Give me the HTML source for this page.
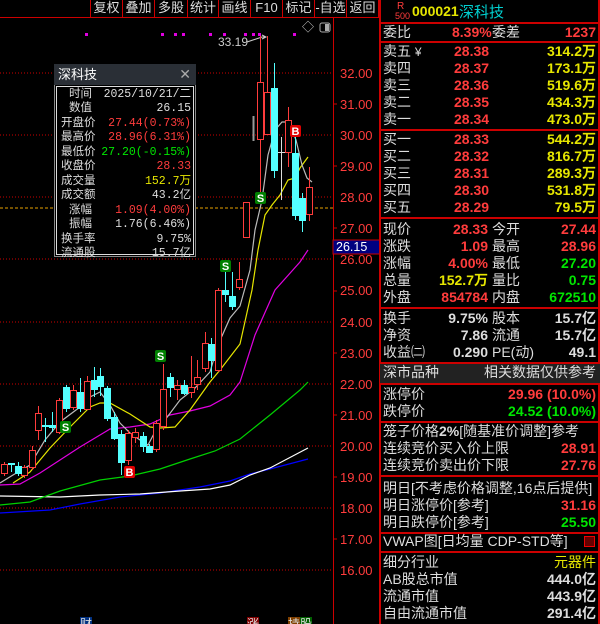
<!DOCTYPE html>
<html><head><meta charset="utf-8"><style>
*{margin:0;padding:0;box-sizing:border-box}
body{width:600px;height:624px;background:#000;position:relative;overflow:hidden;font-family:"Liberation Sans","Noto Sans CJK SC",sans-serif;color:#ddd}
.tb{position:absolute;top:0;height:17px;border-left:1px solid #c00;color:#ddd;font-size:13px;line-height:16px;text-align:center}
.r{position:absolute;left:380px;width:220px;height:17px;font-size:14px;line-height:17px}
.r span{position:absolute}
.l{left:3px;color:#ddd}
.rt{right:4px;text-align:right;font-weight:bold}
.hl{position:absolute;left:380px;width:220px;height:2px;background:#c00}
.red{color:#ff3c3c}.grn{color:#00e600}.yel{color:#e6e600}.wht{color:#ddd}
.pp{position:absolute;left:56px;width:138px;font-size:11.5px;height:15px;line-height:15px}
.pp .a{position:absolute;left:5px;color:#ddd}
.pp .b{position:absolute;right:3px;font-family:"Liberation Mono",monospace}
</style></head><body>
<div class="tb" style="left:90px;width:32px">复权</div>
<div class="tb" style="left:122px;width:32px">叠加</div>
<div class="tb" style="left:154px;width:33px">多股</div>
<div class="tb" style="left:187px;width:31px">统计</div>
<div class="tb" style="left:218px;width:32px">画线</div>
<div class="tb" style="left:250px;width:32px">F10</div>
<div class="tb" style="left:282px;width:32px">标记</div>
<div class="tb" style="left:314px;width:32px">-自选</div>
<div class="tb" style="left:346px;width:33px;border-right:1px solid #c00">返回</div>
<div style="position:absolute;left:0;top:17px;width:380px;height:1px;background:#c00"></div>

<svg style="position:absolute;left:0;top:0" width="380" height="624">
<g stroke="#c00" stroke-dasharray="1,2" stroke-width="1">
<line x1="0" y1="73" x2="333" y2="73"/><line x1="0" y1="135" x2="333" y2="135"/><line x1="0" y1="197" x2="333" y2="197"/><line x1="0" y1="259" x2="333" y2="259"/><line x1="0" y1="322" x2="333" y2="322"/><line x1="0" y1="384" x2="333" y2="384"/><line x1="0" y1="446" x2="333" y2="446"/><line x1="0" y1="508" x2="333" y2="508"/><line x1="0" y1="570" x2="333" y2="570"/>
</g>
<line x1="333.5" y1="18" x2="333.5" y2="624" stroke="#c00"/>
<line x1="0" y1="208" x2="333" y2="208" stroke="#e6a000" stroke-dasharray="3,2"/>
<g fill="#ff3c3c" font-size="13" font-family="Liberation Sans,sans-serif">
<text x="340" y="78">32.00</text><text x="340" y="109">31.00</text><text x="340" y="140">30.00</text><text x="340" y="171">29.00</text><text x="340" y="202">28.00</text><text x="340" y="233">27.00</text><text x="340" y="264">26.00</text><text x="340" y="295">25.00</text><text x="340" y="327">24.00</text><text x="340" y="358">23.00</text><text x="340" y="389">22.00</text><text x="340" y="420">21.00</text><text x="340" y="451">20.00</text><text x="340" y="482">19.00</text><text x="340" y="513">18.00</text><text x="340" y="544">17.00</text><text x="340" y="575">16.00</text>
</g>
<g stroke="#c00"><line x1="333" y1="104" x2="337" y2="104"/><line x1="333" y1="166" x2="337" y2="166"/><line x1="333" y1="228" x2="337" y2="228"/><line x1="333" y1="291" x2="337" y2="291"/><line x1="333" y1="353" x2="337" y2="353"/><line x1="333" y1="415" x2="337" y2="415"/><line x1="333" y1="477" x2="337" y2="477"/><line x1="333" y1="539" x2="337" y2="539"/></g>
<rect x="333" y="240" width="47" height="14" fill="#000080" stroke="#c00"/>
<text x="336" y="251" fill="#fff" font-size="12.5" font-family="Liberation Sans,sans-serif">26.15</text>
<g fill="#e000e0"><rect x="85" y="33" width="3" height="3"/><rect x="161" y="33" width="3" height="3"/><rect x="174" y="33" width="3" height="3"/><rect x="182" y="33" width="3" height="3"/><rect x="209" y="33" width="3" height="3"/><rect x="223" y="33" width="3" height="3"/><rect x="244" y="33" width="3" height="3"/><rect x="252" y="33" width="3" height="3"/><rect x="258" y="33" width="3" height="3"/><rect x="293" y="33" width="3" height="3"/></g>
<text x="218" y="46" fill="#ccc" font-size="12" font-family="Liberation Sans,sans-serif">33.19</text>
<path d="M247 42 L262 37 L266 37 M262 35 L266 37 L262 39" stroke="#ccc" fill="none"/>
<text x="302" y="31" fill="#ccc" font-size="12">◇</text>
<rect x="320" y="23" width="10" height="9" rx="2" fill="none" stroke="#aaa"/><rect x="325" y="24" width="4" height="7" fill="#aaa"/>
<!-- MAs -->
<g fill="none" stroke-width="1.2">
<polyline stroke="#0000ff" points="0,513 50,510 80,504 120,497 160,493 200,487 230,481 250,474 270,469 308,459"/>
<polyline stroke="#ffffff" points="0,496 60,497 100,495 140,494 180,491 210,489 230,485 250,475 270,468 308,448"/>
<polyline stroke="#00d000" points="0,505 30,502 60,491 100,480 130,476 160,469 190,459 215,451 240,439 270,415 300,390 308,382"/>
<polyline stroke="#e000e0" points="0,485 20,484 40,473 60,460 80,447 100,435 110,429 130,427 150,424 170,415 190,411 210,406 230,395 240,382 255,335 275,290 300,262 308,250"/>
<polyline stroke="#e6e600" points="13,483 30,472 50,448 70,427 90,407 100,403 110,403 130,414 150,427 160,428 175,427 190,410 210,382 220,370 240,344 252,290 258,250 265,215 272,205 280,195 288,180 295,178 300,168 308,157"/>
<polyline stroke="#bbbbbb" points="0,483 13,475 30,465 45,440 60,422 80,407 90,397 100,392 110,405 120,423 130,433 140,440 148,445 157,428 165,420 180,400 195,388 210,372 218,345 230,318 240,306 250,270 255,230 262,200 268,155 275,130 282,122 289,122 296,140 302,165 307,178 312,182"/>
</g>
<!-- candles -->
<g stroke="#ff3c3c" fill="#000" stroke-width="1">
<line x1="4.5" y1="462" x2="4.5" y2="476"/><rect x="1.5" y="464.5" width="6" height="9"/>
<line x1="24.5" y1="465" x2="24.5" y2="478"/><rect x="21.5" y="467.5" width="6" height="8"/>
<line x1="32.5" y1="446" x2="32.5" y2="470"/><rect x="29.5" y="450.5" width="6" height="17"/>
<line x1="38.5" y1="406" x2="38.5" y2="440"/><rect x="35.5" y="413.5" width="6" height="17"/>
<line x1="59.5" y1="398" x2="59.5" y2="434"/><rect x="56.5" y="400.5" width="6" height="32"/>
<line x1="73.5" y1="385" x2="73.5" y2="410"/><rect x="70.5" y="390.5" width="6" height="17"/>
<line x1="87.5" y1="376" x2="87.5" y2="410"/><rect x="84.5" y="381.5" width="6" height="28"/>
<line x1="128.5" y1="430" x2="128.5" y2="465"/><rect x="125.5" y="433.5" width="6" height="27"/>
<line x1="135.5" y1="428" x2="135.5" y2="443"/><rect x="132.5" y="432.5" width="6" height="5"/>
<line x1="156.5" y1="420" x2="156.5" y2="452"/><rect x="153.5" y="423.5" width="6" height="26"/>
<line x1="163.5" y1="364" x2="163.5" y2="430"/><rect x="160.5" y="389.5" width="6" height="37"/>
<line x1="177.5" y1="380" x2="177.5" y2="400"/><rect x="174.5" y="385.5" width="6" height="4"/>
<line x1="191.5" y1="356" x2="191.5" y2="398"/><rect x="188.5" y="387.5" width="6" height="5"/>
<line x1="197.5" y1="360" x2="197.5" y2="390"/><rect x="194.5" y="377.5" width="6" height="7"/>
<line x1="205.5" y1="332" x2="205.5" y2="372"/><rect x="202.5" y="343.5" width="6" height="25"/>
<line x1="218.5" y1="288" x2="218.5" y2="372"/><rect x="215.5" y="290.5" width="6" height="80"/>
<line x1="239.5" y1="262" x2="239.5" y2="290"/><rect x="236.5" y="279.5" width="6" height="8"/>
<rect x="243.5" y="202.5" width="6" height="35"/>
<line x1="260.5" y1="36" x2="260.5" y2="193"/><rect x="257.5" y="82.5" width="6" height="57"/>
<line x1="267.5" y1="36" x2="267.5" y2="134"/><rect x="264.5" y="92.5" width="6" height="42"/>
<line x1="288.5" y1="107" x2="288.5" y2="167"/><rect x="285.5" y="120.5" width="6" height="32"/>
<line x1="309.5" y1="167" x2="309.5" y2="221"/><rect x="306.5" y="187.5" width="6" height="27"/>
</g>
<g stroke="#54ffff" fill="#54ffff" stroke-width="1">
<line x1="11.5" y1="463" x2="11.5" y2="472"/><rect x="8.5" y="463.5" width="6" height="1"/>
<line x1="18.5" y1="462" x2="18.5" y2="476"/><rect x="15.5" y="466.5" width="6" height="7"/>
<line x1="45.5" y1="418" x2="45.5" y2="442"/><rect x="42.5" y="425.5" width="6" height="1"/>
<line x1="52.5" y1="412" x2="52.5" y2="432"/><rect x="49.5" y="425.5" width="6" height="2"/>
<line x1="66.5" y1="385" x2="66.5" y2="412"/><rect x="63.5" y="387.5" width="6" height="21"/>
<line x1="80.5" y1="378" x2="80.5" y2="412"/><rect x="77.5" y="392.5" width="6" height="16"/>
<line x1="94.5" y1="367" x2="94.5" y2="397"/><rect x="91.5" y="380.5" width="6" height="9"/>
<line x1="100.5" y1="368" x2="100.5" y2="396"/><rect x="97.5" y="376.5" width="6" height="10"/>
<line x1="107.5" y1="386" x2="107.5" y2="421"/><rect x="104.5" y="388.5" width="6" height="30"/>
<line x1="114.5" y1="412" x2="114.5" y2="440"/><rect x="111.5" y="417.5" width="6" height="21"/>
<line x1="121.5" y1="430" x2="121.5" y2="475"/><rect x="118.5" y="434.5" width="6" height="28"/>
<line x1="143.5" y1="432" x2="143.5" y2="452"/><rect x="140.5" y="436.5" width="6" height="10"/>
<line x1="149.5" y1="444" x2="149.5" y2="453"/><rect x="146.5" y="446.5" width="6" height="6"/>
<line x1="170.5" y1="373" x2="170.5" y2="397"/><rect x="167.5" y="377.5" width="6" height="10"/>
<line x1="184.5" y1="380" x2="184.5" y2="395"/><rect x="181.5" y="385.5" width="6" height="8"/>
<line x1="211.5" y1="338" x2="211.5" y2="378"/><rect x="208.5" y="344.5" width="6" height="16"/>
<line x1="225.5" y1="272" x2="225.5" y2="302"/><rect x="222.5" y="290.5" width="6" height="4"/>
<line x1="232.5" y1="272" x2="232.5" y2="310"/><rect x="229.5" y="296.5" width="6" height="10"/>
<line x1="274.5" y1="63" x2="274.5" y2="178"/><rect x="271.5" y="88.5" width="6" height="82"/>
<line x1="295.5" y1="137" x2="295.5" y2="220"/><rect x="292.5" y="153.5" width="6" height="62"/>
<line x1="302.5" y1="193" x2="302.5" y2="232"/><rect x="299.5" y="198.5" width="6" height="22"/>
</g>
<line x1="253.5" y1="116" x2="253.5" y2="141" stroke="#999" stroke-width="2"/>
<line x1="281.5" y1="137" x2="281.5" y2="200" stroke="#ddd"/><line x1="278" y1="152.5" x2="285" y2="152.5" stroke="#ddd"/>
<!-- S/B markers -->
<g font-size="11" font-weight="bold" font-family="Liberation Sans,sans-serif" fill="#fff" text-anchor="middle">
<rect x="60" y="421" width="11" height="12" rx="2" fill="#008000"/><text x="65.5" y="431">S</text>
<rect x="155" y="350" width="11" height="12" rx="2" fill="#008000"/><text x="160.5" y="360">S</text>
<rect x="220" y="260" width="11" height="12" rx="2" fill="#008000"/><text x="225.5" y="270">S</text>
<rect x="255" y="192" width="11" height="12" rx="2" fill="#008000"/><text x="260.5" y="202">S</text>
<rect x="124" y="466" width="11" height="12" rx="2" fill="#e00000"/><text x="129.5" y="476">B</text>
<rect x="290" y="125" width="11" height="12" rx="2" fill="#e00000"/><text x="295.5" y="135">B</text>
</g>
<g font-size="12" font-family="Liberation Sans,Noto Sans CJK SC,sans-serif">
<rect x="80" y="617" width="12" height="7" fill="#003080"/><text x="80" y="628" fill="#ddd">财</text>
<rect x="247" y="617" width="12" height="7" fill="#800000"/><text x="247" y="628" fill="#ddd">涨</text>
<rect x="288" y="617" width="12" height="7" fill="#804000"/><rect x="300" y="617" width="12" height="7" fill="#006000"/><text x="288" y="628" fill="#ddd">持股</text>
</g>
</svg>

<!-- popup -->
<div style="position:absolute;left:54px;top:64px;width:142px;height:193px;background:#000;border:1px solid #888"></div>
<div style="position:absolute;left:54px;top:64px;width:142px;height:21px;background:#2a2f36;color:#fff;font-size:13px;line-height:21px;padding-left:4px">深科技<span style="position:absolute;right:5px;color:#aaa;font-size:14px">✕</span></div>
<div style="position:absolute;left:56px;top:86px;width:138px;height:169px;border:1px solid #ddd"></div>
<div class="pp" style="top:87px"><span class="a" style="left:13px">时间</span><span class="b" style="color:#ddd">2025/10/21/二</span></div>
<div class="pp" style="top:101px"><span class="a" style="left:13px">数值</span><span class="b" style="color:#ddd">26.15</span></div>
<div class="pp" style="top:116px"><span class="a">开盘价</span><span class="b red">27.44(0.73%)</span></div>
<div class="pp" style="top:130px"><span class="a">最高价</span><span class="b red">28.96(6.31%)</span></div>
<div class="pp" style="top:145px"><span class="a">最低价</span><span class="b grn">27.20(-0.15%)</span></div>
<div class="pp" style="top:159px"><span class="a">收盘价</span><span class="b red">28.33</span></div>
<div class="pp" style="top:174px"><span class="a">成交量</span><span class="b yel">152.7万</span></div>
<div class="pp" style="top:188px"><span class="a">成交额</span><span class="b" style="color:#ddd">43.2亿</span></div>
<div class="pp" style="top:203px"><span class="a" style="left:13px">涨幅</span><span class="b red">1.09(4.00%)</span></div>
<div class="pp" style="top:217px"><span class="a" style="left:13px">振幅</span><span class="b" style="color:#ddd">1.76(6.46%)</span></div>
<div class="pp" style="top:232px"><span class="a">换手率</span><span class="b" style="color:#ddd">9.75%</span></div>
<div class="pp" style="top:246px"><span class="a">流通股</span><span class="b" style="color:#ddd">15.7亿</span></div>

<!-- right panel -->
<div style="position:absolute;left:379px;top:0;width:2px;height:624px;background:#c00"></div>
<div style="position:absolute;left:598px;top:0;width:2px;height:624px;background:#c00"></div>
<div style="position:absolute;left:397px;top:2px;font-size:10px;color:#ff3c3c;line-height:10px">R</div>
<div style="position:absolute;left:395px;top:11px;font-size:9px;color:#ff3c3c;line-height:10px">500</div>
<div style="position:absolute;left:412px;top:3px;font-size:14px;font-weight:bold;color:#e6e600">000021</div>
<div style="position:absolute;left:459px;top:1px;font-size:15px;color:#00d0d0">深科技</div>
<div class="hl" style="top:22px"></div>
<div class="r" style="top:24px"><span class="l">委比</span><span class="red" style="left:72px;font-weight:bold">8.39%</span><span style="left:112px">委差</span><span class="rt red">1237</span></div>
<div class="hl" style="top:41px"></div>
<div class="r" style="top:43px"><span class="l">卖五 <span style="position:static;font-size:12px">¥</span></span><span class="red" style="left:74px;font-weight:bold">28.38</span><span class="rt yel">314.2万</span></div>
<div class="r" style="top:60px"><span class="l">卖四</span><span class="red" style="left:74px;font-weight:bold">28.37</span><span class="rt yel">173.1万</span></div>
<div class="r" style="top:77px"><span class="l">卖三</span><span class="red" style="left:74px;font-weight:bold">28.36</span><span class="rt yel">519.6万</span></div>
<div class="r" style="top:94px"><span class="l">卖二</span><span class="red" style="left:74px;font-weight:bold">28.35</span><span class="rt yel">434.3万</span></div>
<div class="r" style="top:111px"><span class="l">卖一</span><span class="red" style="left:74px;font-weight:bold">28.34</span><span class="rt yel">473.0万</span></div>
<div class="hl" style="top:129px"></div>
<div class="r" style="top:131px"><span class="l">买一</span><span class="red" style="left:74px;font-weight:bold">28.33</span><span class="rt yel">544.2万</span></div>
<div class="r" style="top:148px"><span class="l">买二</span><span class="red" style="left:74px;font-weight:bold">28.32</span><span class="rt yel">816.7万</span></div>
<div class="r" style="top:165px"><span class="l">买三</span><span class="red" style="left:74px;font-weight:bold">28.31</span><span class="rt yel">289.3万</span></div>
<div class="r" style="top:182px"><span class="l">买四</span><span class="red" style="left:74px;font-weight:bold">28.30</span><span class="rt yel">531.8万</span></div>
<div class="r" style="top:199px"><span class="l">买五</span><span class="red" style="left:74px;font-weight:bold">28.29</span><span class="rt yel">79.5万</span></div>
<div class="hl" style="top:217px"></div>
<div class="r" style="top:221px"><span class="l">现价</span><span class="red" style="right:112px;font-weight:bold">28.33</span><span style="left:112px">今开</span><span class="rt red">27.44</span></div>
<div class="r" style="top:238px"><span class="l">涨跌</span><span class="red" style="right:112px;font-weight:bold">1.09</span><span style="left:112px">最高</span><span class="rt red">28.96</span></div>
<div class="r" style="top:255px"><span class="l">涨幅</span><span class="red" style="right:112px;font-weight:bold">4.00%</span><span style="left:112px">最低</span><span class="rt grn">27.20</span></div>
<div class="r" style="top:272px"><span class="l">总量</span><span class="yel" style="right:112px;font-weight:bold">152.7万</span><span style="left:112px">量比</span><span class="rt grn">0.75</span></div>
<div class="r" style="top:289px"><span class="l">外盘</span><span class="red" style="right:112px;font-weight:bold">854784</span><span style="left:112px">内盘</span><span class="rt grn">672510</span></div>
<div class="hl" style="top:307px"></div>
<div class="r" style="top:310px"><span class="l">换手</span><span style="right:112px;font-weight:bold">9.75%</span><span style="left:112px">股本</span><span class="rt">15.7亿</span></div>
<div class="r" style="top:327px"><span class="l">净资</span><span style="right:112px;font-weight:bold">7.86</span><span style="left:112px">流通</span><span class="rt">15.7亿</span></div>
<div class="r" style="top:344px"><span class="l">收益㈡</span><span style="right:112px;font-weight:bold">0.290</span><span style="left:112px">PE(动)</span><span class="rt">49.1</span></div>
<div class="hl" style="top:362px"></div>
<div class="r" style="top:364px;height:19px;background:#222"><span class="l">深市品种</span><span style="right:4px">相关数据仅供参考</span></div>
<div class="hl" style="top:383px"></div>
<div class="r" style="top:386px"><span class="l">涨停价</span><span class="rt red">29.96 (10.0%)</span></div>
<div class="r" style="top:403px"><span class="l">跌停价</span><span class="rt grn">24.52 (10.0%)</span></div>
<div class="hl" style="top:421px"></div>
<div class="r" style="top:423px"><span class="l">笼子价格<b>2%</b>[随基准价调整]参考</span></div>
<div class="r" style="top:440px"><span class="l">连续竞价买入价上限</span><span class="rt red">28.91</span></div>
<div class="r" style="top:457px"><span class="l">连续竞价卖出价下限</span><span class="rt red">27.76</span></div>
<div class="hl" style="top:475px"></div>
<div class="r" style="top:480px"><span class="l">明日[不考虑价格调整,16点后提供]</span></div>
<div class="r" style="top:497px"><span class="l">明日涨停价[参考]</span><span class="rt red">31.16</span></div>
<div class="r" style="top:514px"><span class="l">明日跌停价[参考]</span><span class="rt grn">25.50</span></div>
<div class="hl" style="top:532px"></div>
<div class="r" style="top:533px"><span class="l">VWAP图[日均量 CDP-STD等]</span><span style="right:5px;top:3px;width:11px;height:11px;border:1px solid #e00;background:#600"></span></div>
<div class="hl" style="top:551px"></div>
<div class="r" style="top:554px"><span class="l">细分行业</span><span class="yel" style="right:4px">元器件</span></div>
<div class="r" style="top:571px"><span class="l">AB股总市值</span><span class="rt">444.0亿</span></div>
<div class="r" style="top:588px"><span class="l">流通市值</span><span class="rt">443.9亿</span></div>
<div class="r" style="top:605px"><span class="l">自由流通市值</span><span class="rt">291.4亿</span></div>
</body></html>
